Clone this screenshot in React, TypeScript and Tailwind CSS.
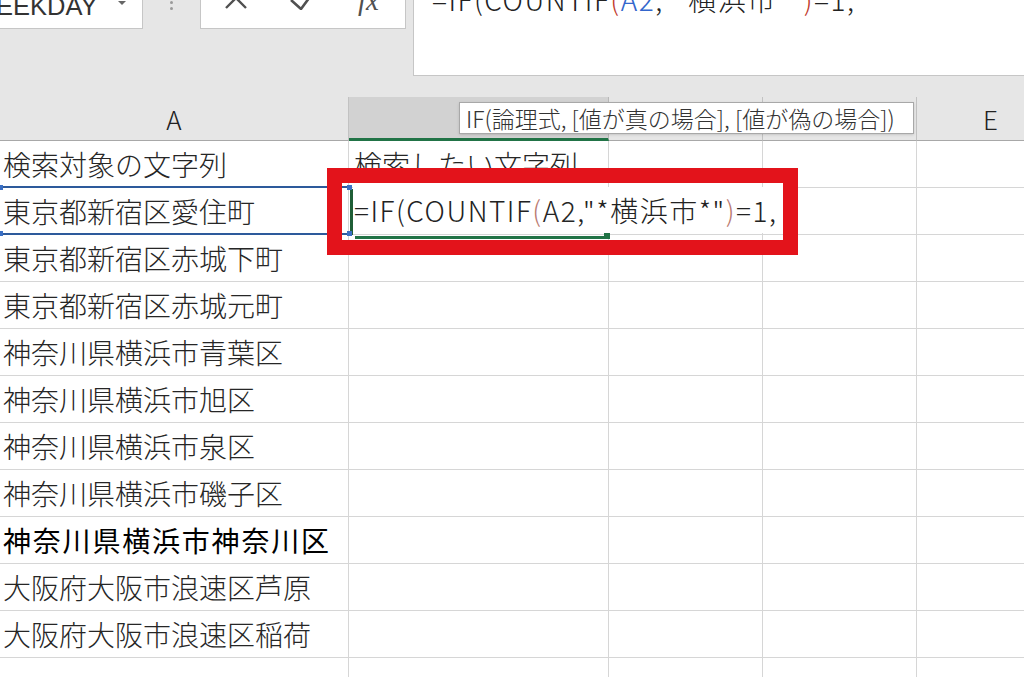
import React from "react";

const rows = [
  "検索対象の文字列",
  "東京都新宿区愛住町",
  "東京都新宿区赤城下町",
  "東京都新宿区赤城元町",
  "神奈川県横浜市青葉区",
  "神奈川県横浜市旭区",
  "神奈川県横浜市泉区",
  "神奈川県横浜市磯子区",
  "神奈川県横浜市神奈川区",
  "大阪府大阪市浪速区芦原",
  "大阪府大阪市浪速区稲荷",
  "",
];

const cell = "h-[47px] border-r border-b border-[#d6d6d6]";
const cellText = "text-[28px] leading-[46px] whitespace-nowrap";

// formula text, split so the refs and parens can take their own colours
function Formula({ refColor, paren }: { refColor: string; paren: string }) {
  return (
    <>
      <span>=IF(COUNTIF</span>
      <span style={{ color: paren }}>(</span>
      <span style={{ color: refColor }}>A2</span>
      <span>,"*横浜市*"</span>
      <span style={{ color: paren }}>)</span>
      <span>=1,</span>
    </>
  );
}

function FormulaStrip() {
  return (
    <div className="flex h-[97px] items-start bg-[#e6e6e6]">
      {/* name box */}
      <div className="flex h-[29px] w-[143px] items-start overflow-hidden border-r border-b border-[#c6c6c6] bg-white">
        <span className="-mt-[6px] -ml-[28px] whitespace-nowrap font-['Liberation_Sans',sans-serif] text-[25.5px] leading-none text-[#333]">
          WEEKDAY
        </span>
        <span className="mt-[1px] mr-[16px] ml-auto h-0 w-0 border-x-[4px] border-t-[4px] border-x-transparent border-t-[#666]" />
      </div>

      {/* splitter dots */}
      <div className="flex w-[57px] flex-col items-center gap-[3px] pt-[1px]">
        <span className="h-[3px] w-[3px] rounded-full bg-[#9a9a9a]" />
        <span className="h-[3px] w-[3px] rounded-full bg-[#9a9a9a]" />
      </div>

      {/* cancel / enter / insert function */}
      <div className="flex h-[29px] w-[206px] items-start overflow-hidden border-x border-b border-[#c6c6c6] bg-white">
        <svg className="-mt-[13px] ml-[24px] shrink-0" width="22" height="22" viewBox="0 0 22 22">
          <path d="M1 1 L21 21 M21 1 L1 21" stroke="#505050" strokeWidth="2.4" fill="none" />
        </svg>
        <svg className="-mt-[12px] ml-[43px] shrink-0" width="26" height="22" viewBox="0 0 26 22">
          <path d="M1 12 L11 21 L25 2" stroke="#505050" strokeWidth="2.6" fill="none" />
        </svg>
        <span className="-mt-[14px] ml-[42px] font-['Liberation_Serif',serif] text-[29px] italic leading-none text-[#505050]">
          fx
        </span>
      </div>

      {/* formula input */}
      <div className="ml-[7px] h-[76px] flex-1 overflow-hidden border-b border-l border-[#c6c6c6] bg-white pl-[18px]">
        <div className="-mt-[15px] whitespace-nowrap text-[28px] font-light tracking-[1.5px] leading-none text-[#222]">
          <Formula refColor="#3366cc" paren="#c0392b" />
        </div>
      </div>
    </div>
  );
}

function HeaderRow() {
  const head = "h-[44px] border-r border-b border-r-[#c2c2c2] border-b-[#a8a8a8] bg-[#e6e6e6]";
  return (
    <>
      <div className={`${head} flex items-center justify-center text-[26px] font-light text-[#222]`}>A</div>
      <div className="h-[44px] border-r border-b-[3px] border-r-[#b8b8b8] border-b-[#217346] bg-[#d2d2d2]" />
      <div className={head} />
      <div className={head} />
      <div className="flex h-[44px] items-center border-b border-b-[#a8a8a8] bg-[#e6e6e6] pl-[66px] text-[26px] font-light text-[#222]">
        E
      </div>
    </>
  );
}

// B2 in edit mode: the text runs on over C2, framed by the active-cell border
function EditCell() {
  return (
    <div className={`relative ${cell}`}>
      <div className="absolute -top-[1px] -bottom-[3px] left-[1px] z-10 flex w-[434px]">
        <span className="my-[2px] w-[3px] shrink-0 bg-[#1f5e36]" />
        <div className="flex flex-1 flex-col">
          <span className="ml-[2px] h-[3px] w-[254px] bg-[#217346]" />
          <div className={`flex-1 bg-white pl-[1px] tracking-[1.5px] text-[#222] ${cellText} leading-[42px]`}>
            <Formula refColor="#262626" paren="#b9796f" />
          </div>
          <div className="flex items-end">
            <span className="ml-[2px] h-[3px] w-[249px] bg-[#217346]" />
            <span className="h-[6px] w-[6px] bg-[#217346]" />
          </div>
        </div>
      </div>
    </div>
  );
}

function RefCell({ text }: { text: string }) {
  return (
    <div className={`relative pl-[3px] ${cell} ${cellText}`}>
      {text}
      {/* range colour for A2 */}
      <div className="absolute -top-[2px] -right-[1px] -bottom-[1px] left-0 flex flex-col justify-between border-y-2 border-[#2d5a9b]">
        <div className="-mx-[2px] -mt-[3px] flex justify-between">
          <span className="h-[5px] w-[5px] bg-[#3a6fc4]" />
          <span className="z-30 -mr-[1px] h-[5px] w-[5px] bg-[#3a6fc4]" />
        </div>
        <div className="-mx-[2px] -mb-[3px] flex justify-between">
          <span className="h-[5px] w-[5px] bg-[#3a6fc4]" />
          <span className="z-30 -mr-[1px] h-[5px] w-[5px] bg-[#3a6fc4]" />
        </div>
      </div>
    </div>
  );
}

function Sheet() {
  return (
    <div className="relative grid grid-cols-[349px_260px_154px_154px_1fr] font-light text-[#262626]">
      <HeaderRow />
      {rows.map((text, i) => (
        <React.Fragment key={i}>
          {i === 1 ? (
            <RefCell text={text} />
          ) : i === 8 ? (
            <div className={`pl-[3px] text-[28px] font-normal tracking-[1.8px] leading-[46px] whitespace-nowrap text-black ${cell}`}>{text}</div>
          ) : (
            <div className={`pl-[3px] ${cell} ${cellText}`}>{text}</div>
          )}
          {i === 1 ? (
            <EditCell />
          ) : (
            <div className={`pl-[5px] ${cell} ${cellText}`}>{i === 0 ? "検索したい文字列" : ""}</div>
          )}
          <div className={cell} />
          <div className={cell} />
          <div className="h-[47px] border-b border-[#d6d6d6]" />
        </React.Fragment>
      ))}

      {/* function argument tip */}
      <div className="absolute top-[5px] left-[459px] z-40 h-[32px] w-[455px] border border-[#a8a8a8] bg-white pl-[6px] text-[23px] leading-[30px] whitespace-nowrap text-[#333] shadow-sm">
        IF(論理式, [値が真の場合], [値が偽の場合])
      </div>

      {/* highlight frame */}
      <div className="pointer-events-none absolute top-[71px] left-[327px] z-50 h-[87px] w-[471px] border-[15px] border-[#e3131b]" />
    </div>
  );
}

export default function App() {
  return (
    <div className="h-[677px] w-[1024px] overflow-hidden bg-white font-['Noto_Sans_CJK_JP',sans-serif]">
      <FormulaStrip />
      <Sheet />
    </div>
  );
}
